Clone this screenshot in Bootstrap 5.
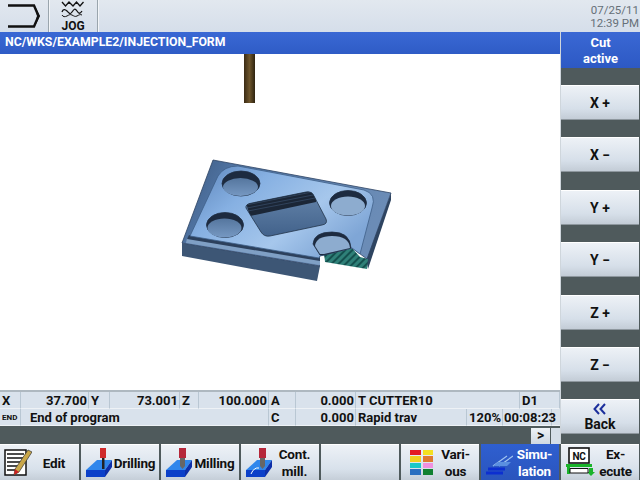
<!DOCTYPE html>
<html lang="en"><head><meta charset="utf-8"><title>Simulation</title>
<link href="https://cdn.jsdelivr.net/npm/bootstrap@5.3.0/dist/css/bootstrap.min.css" rel="stylesheet">
<script src="https://cdn.jsdelivr.net/npm/bootstrap@5.3.0/dist/js/bootstrap.bundle.min.js"></script>
<style>
html,body{width:640px;height:480px;overflow:hidden;margin:0}
body{background:#4f5a5c;font-family:Roboto,"DejaVu Sans Condensed","Liberation Sans",sans-serif;font-weight:700;font-size:13px;line-height:16px;color:#111}
.topbar{height:32px;background:linear-gradient(#e2e8ef,#d5deea)}
.topcell{width:49px;border-right:1px solid #9aa5ad;box-shadow:1px 0 0 #f2f5f8}
.jogcell{font-size:12px;line-height:10px}
.clock{font-weight:400;font-size:11.5px;line-height:13px;color:#667078;padding:4px 1px 0 0;text-align:right}
.workarea{height:412px}
.leftcol{width:560px}
.pathbar{height:22px;background:linear-gradient(#3a68d4,#2f5cc6);color:#fff;line-height:21px;font-size:12.3px;padding-left:5px}
.canvasbox{height:338px;background:#fff;display:block;flex:none}
.statusgrid{height:34px;background:#d9e2ec;display:grid;grid-template-columns:21px 68px 21px 70px 19px 70px 27px 60px 111px 36px 17px 32px 8px;grid-template-rows:17px 17px;box-shadow:0 -2px 0 #aeb8c0;flex:none}
.statusgrid>div{padding:1px 2px 0;white-space:nowrap;line-height:16px;border-bottom:1px solid #eef2f6;border-right:1px solid #b9c7d3}
.statusgrid>div.noline{border-right:0}
.num{text-align:right}
.statusgrid>div.num{padding:1px 1px 0}
.statusgrid>.endlabel{font-size:8px}
.colspan2{grid-column:span 2}
.colspan3{grid-column:span 3}
.colspan5{grid-column:span 5}
.statusgrid>.progtext{padding-left:9px}
.darkstrip{height:18px}
.mini{width:19px;height:16px;background:linear-gradient(#eef2f6,#cfd8e2);font-size:14px;line-height:15px;text-align:center;margin-right:1px}
.miniblank{width:9px;height:16px;background:#d5dee8}
.rightcol{width:80px;border-left:1px solid #cfd6dc}
.cutbox{height:36px;background:linear-gradient(#3a68d4,#2d59c4);color:#fff;text-align:center;padding-top:3px;line-height:16px;font-size:13px;flex:none}
.vkey{flex:none;height:35px;width:78px;margin:0 0 17.4px 0;background:linear-gradient(#eef2f7,#d6dfe9 70%,#c3ccd6);border:0;border-bottom:1px solid #8e979e;box-shadow:inset 0 1px 0 #fff;color:#111;font-weight:700;font-size:14px;padding:2px 0 0;line-height:16px;text-align:center}
.vkey.firstk{margin-top:17px}
.vkey.backkey{margin:0;padding-top:1px}
.softrow{height:36px;display:grid;grid-template-columns:repeat(8,80px)}
.softkey{margin-left:1px;margin-right:1px;background:linear-gradient(#eef2f7,#d8e1eb 70%,#c5ced8);box-shadow:inset 0 1px 0 #fff;display:flex;align-items:center;font-size:13.5px;line-height:17px;color:#111;padding:0 3px 0 4px;letter-spacing:-.2px}
.softkey:first-child{margin-left:0}
.softkey.activekey{background:linear-gradient(#2f5fd0,#2a55bd);color:#fff;box-shadow:none}
.softlabel{flex:1;text-align:center;padding-top:2px}
.chev{display:block;height:13px;margin-bottom:1px}
</style></head>
<body>
<div class="topbar d-flex">
  <div class="topcell d-flex align-items-center justify-content-center">
    <svg width="34" height="26" viewBox="0 0 34 26"><path d="M1 2.500H27L31.500 13L27 23.500H1" fill="none" stroke="#111" stroke-width="2.400"/><path d="M28 3L33 13L28 23L30 13Z" fill="#111"/></svg>
  </div>
  <div class="topcell jogcell d-flex flex-column align-items-center">
    <svg width="24" height="21" viewBox="0 0 24 21"><path d="M1 2l3.500 4 3.500-4 4 4 3.500-4 3.500 4 3.500-4" fill="none" stroke="#111" stroke-width="1.300"/><path d="M1 12c1-3 3-3 5-1s3 4 5 1 3-4 5-1 3 3 5 0" fill="none" stroke="#111" stroke-width="1.300"/><path d="M1 15c1 2 3 2 5 1s3-2 5-1 3 2 5 1 3-2 5-1" fill="none" stroke="#111"/></svg>
    <span>JOG</span>
  </div>
  <div class="flex-grow-1"></div>
  <div class="clock">07/25/11<br>12:39 PM</div>
</div>
<div class="workarea d-flex">
  <div class="leftcol d-flex flex-column">
    <div class="pathbar">NC/WKS/EXAMPLE2/INJECTION_FORM</div>
    <svg class="canvasbox" width="560" height="338" viewBox="0 54 560 338">
      <defs>
        <linearGradient id="toolg" x1="0" x2="1" y1="0" y2="0"><stop offset="0" stop-color="#3a2a14"/><stop offset=".5" stop-color="#6d552c"/><stop offset="1" stop-color="#2e2310"/></linearGradient>
        <linearGradient id="topg" x1="0" y1="0" x2="1" y2=".6"><stop offset="0" stop-color="#5a82b8"/><stop offset=".35" stop-color="#86b0e2"/><stop offset=".7" stop-color="#a6c7ec"/><stop offset="1" stop-color="#7fa6d6"/></linearGradient>
        <linearGradient id="ledge" x1="0" y1="0" x2="1" y2=".3"><stop offset="0" stop-color="#3b587f"/><stop offset=".3" stop-color="#557aaa"/><stop offset="1" stop-color="#6b8cb6"/></linearGradient>
        <linearGradient id="floorg" x1="0" y1="0" x2="0" y2="1"><stop offset="0" stop-color="#55769e"/><stop offset="1" stop-color="#7698c2"/></linearGradient>
        <linearGradient id="pfloor" x1="0" y1="0" x2="0" y2="1"><stop offset="0" stop-color="#6787ad"/><stop offset="1" stop-color="#3f5f88"/></linearGradient>
        <clipPath id="pocketclip"><path d="M246 208Q245 204 252 203L306 192Q312 191 314 196L326 219Q328 224 322 225L270 236Q264 237 261 232Z"/></clipPath>
        <pattern id="hatch" width="5" height="5" patternUnits="userSpaceOnUse" patternTransform="rotate(45)"><rect width="5" height="5" fill="#2f8078"/><rect width="2" height="5" fill="#14504e"/></pattern>
      </defs>
      <rect x="244" y="54" width="11" height="49" fill="url(#toolg)"/>
      <path d="M182 243L320 266L317 281L182 256Z" fill="#3d5675"/>
      <path d="M391 193V200L368 269L366 259Z" fill="#2e4460"/>
      <path d="M324 255L352 248L360 257L368 259L367 269L325 262Z" fill="url(#hatch)"/>
      <path d="M213 160L391 193L367 259L352 248L324 255L320 256L320 266L182 243Z" fill="url(#ledge)" stroke="#2d4362" stroke-width=".8"/>
      <path d="M324 255L320 256L320 268L325 268Z" fill="#fff"/>
      <path d="M186 243L320 265L320 260L187 238Z" fill="#7f9fc4"/>
      <path d="M187 239L320 261L320 257L189 235Z" fill="#2c405c"/>
      <path d="M190 236L218 176Q224 166 238 166L364 190Q377 194 372 208L360 254L352 248L324 255L320 256L319 258Z" fill="url(#topg)" stroke="#3f5f88" stroke-width=".8"/>
      <g stroke="#1f2e44" stroke-width=".8">
        <ellipse cx="241" cy="183.500" rx="19" ry="12.500" fill="#1d2b40"/><ellipse cx="240.500" cy="187" rx="17.500" ry="9" fill="url(#floorg)" stroke="none"/>
        <ellipse cx="225" cy="225" rx="18.500" ry="12.500" fill="#1d2b40"/><ellipse cx="224.500" cy="228" rx="17" ry="9.500" fill="url(#floorg)" stroke="none"/>
        <ellipse cx="348" cy="203" rx="18.500" ry="12.500" fill="#1d2b40"/><ellipse cx="348" cy="206" rx="17" ry="9.500" fill="#8daccf" stroke="none"/>
      </g>
      <path d="M313 244Q314 232 332 232Q350 232 351 248L324 255L320 255Z" fill="#1d2b40" stroke="#1f2e44" stroke-width=".8"/>
      <path d="M315 246Q316 236 332 236Q349 236 350 248L324 254L320 254Z" fill="#8daccf"/>
      <g clip-path="url(#pocketclip)">
        <rect x="240" y="188" width="92" height="52" fill="url(#pfloor)"/>
        <path d="M244 196L316 182V202L250 216Z" fill="#1b2636"/>
        <path d="M246 205L312 192M247 208L313 195M248 211L315 198" stroke="#3a4f6c" stroke-width=".7" fill="none"/>
      </g>
      <path d="M246 208Q245 204 252 203L306 192Q312 191 314 196L326 219Q328 224 322 225L270 236Q264 237 261 232Z" fill="none" stroke="#223349" stroke-width=".8"/>
    </svg>
    <div class="statusgrid">
      <div>X</div><div class="num">37.700</div><div>Y</div><div class="num">73.001</div><div>Z</div><div class="num">100.000</div><div>A</div><div class="num">0.000</div><div class="colspan3">T CUTTER10</div><div class="colspan2">D1</div>
      <div class="endlabel">END</div><div class="colspan5 progtext">End of program</div><div>C</div><div class="num">0.000</div><div>Rapid trav</div><div class="num">120%</div><div class="colspan2 num">00:08:23</div><div class="noline"></div>
    </div>
    <div class="darkstrip d-flex justify-content-end align-items-end">
      <div class="mini">&gt;</div><div class="miniblank"></div>
    </div>
  </div>
  <div class="rightcol d-flex flex-column">
    <div class="cutbox">Cut<br>active</div>
    <button class="vkey firstk">X +</button>
    <button class="vkey">X −</button>
    <button class="vkey">Y +</button>
    <button class="vkey">Y −</button>
    <button class="vkey">Z +</button>
    <button class="vkey">Z −</button>
    <button class="vkey backkey"><svg class="chev mx-auto" width="16" height="13" viewBox="0 0 16 13"><path d="M7 2L2.500 7L7 12M13 2L8.500 7L13 12" fill="none" stroke="#1c2f9c" stroke-width="2"/></svg>Back</button>
  </div>
</div>
<div class="softrow">
  <div class="softkey">
    <svg width="28" height="28" viewBox="0 0 28 28"><rect x="1" y="2" width="21" height="25" fill="#fff" stroke="#111" stroke-width="1.500"/><path d="M3 6H20M3 10H19M3 14H18M3 18H16M3 22H13" stroke="#111" stroke-width="1.500"/><path d="M24 2L28 4L15 24L10 27L11 21Z" fill="#c9a74a" stroke="#333" stroke-width=".7"/><path d="M10 27L11 21L15 24Z" fill="#c22"/></svg>
    <span class="softlabel">Edit</span>
  </div>
  <div class="softkey">
    <svg width="28" height="30" viewBox="0 0 28 30"><path d="M1 23L12 13H27L20 23Z" fill="#2f86ec"/><path d="M1 23H20V30H1Z" fill="#0b3fc9"/><path d="M20 23L27 13V20L20 30Z" fill="#0d2fa8"/><rect x="15" y="1" width="6" height="10" fill="#cf2a2a"/><rect x="17" y="11" width="2.500" height="11" fill="#222"/></svg>
    <span class="softlabel">Drilling</span>
  </div>
  <div class="softkey">
    <svg width="28" height="30" viewBox="0 0 28 30"><path d="M1 23L12 13H27L20 23Z" fill="#2f86ec"/><path d="M1 23H20V30H1Z" fill="#0b3fc9"/><path d="M20 23L27 13V20L20 30Z" fill="#0d2fa8"/><rect x="14" y="1" width="7" height="10" fill="#b5273a"/><path d="M15 11H20V19L17.500 22L15 19Z" fill="#666"/></svg>
    <span class="softlabel">Milling</span>
  </div>
  <div class="softkey">
    <svg width="28" height="30" viewBox="0 0 28 30"><path d="M1 23L12 13H27L20 23Z" fill="#2f86ec"/><path d="M1 23H20V30H1Z" fill="#0b3fc9"/><path d="M20 23L27 13V20L20 30Z" fill="#0d2fa8"/><rect x="14" y="1" width="7" height="10" fill="#b5273a"/><path d="M15 11H20V19L17.500 22L15 19Z" fill="#666"/><path d="M6 27Q9 20 14 21" stroke="#fff" fill="none"/></svg>
    <span class="softlabel">Cont.<br>mill.</span>
  </div>
  <div class="softkey"></div>
  <div class="softkey">
    <svg width="26" height="28" viewBox="0 0 26 28" class="ms-1"><rect x="1" y="2" width="11" height="5" fill="#e31b23"/><rect x="1" y="8" width="11" height="6" fill="#f0d020"/><rect x="1" y="15" width="11" height="5" fill="#18c8c8"/><rect x="1" y="21" width="11" height="6" fill="#2a6fc0"/><rect x="14" y="2" width="10" height="5" fill="#f4e020"/><rect x="14" y="8" width="10" height="6" fill="#e07a30"/><rect x="14" y="15" width="10" height="5" fill="#f090e0"/><rect x="14" y="21" width="10" height="6" fill="#108030"/></svg>
    <span class="softlabel">Vari-<br>ous</span>
  </div>
  <div class="softkey activekey">
    <svg width="28" height="28" viewBox="0 0 28 28"><path d="M1 25H18M3 21H20" stroke="#0c2fd0" stroke-width="3"/><path d="M8 18L22 8M14 18L28 8" stroke="#9fc4f0" stroke-width="1.200"/><path d="M8 18H22L26 14H13Z" fill="#5a8fe0"/></svg>
    <span class="softlabel">Simu-<br>lation</span>
  </div>
  <div class="softkey">
    <svg width="30" height="30" viewBox="0 0 30 30"><rect x="4" y="1" width="20" height="15" fill="#fff" stroke="#111" stroke-width="1.600"/><text x="14" y="12.500" font-size="10" text-anchor="middle" fill="#111" font-weight="700">NC</text><path d="M1 17H27V20H1Z" fill="#19b32a"/><path d="M2 20H5V27H2ZM24 21H28V25H30L26 29L22 25H24Z" fill="#19b32a"/><path d="M5 21.500H23V26H5Z" fill="#fff" stroke="#111"/></svg>
    <span class="softlabel">Ex-<br>ecute</span>
  </div>
</div>
</body></html>
